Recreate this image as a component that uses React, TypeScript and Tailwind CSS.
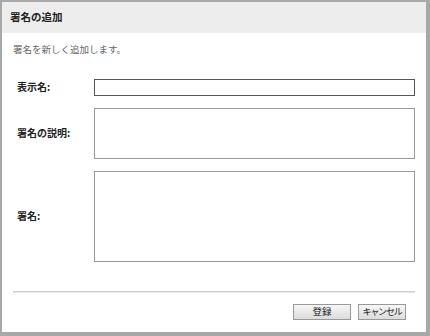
const font = { fontFamily: '"Noto Sans CJK JP", "Noto Sans", sans-serif' };

function Field({ label, height, dark }: { label: string; height: string; dark?: boolean }) {
  return (
    <div className="flex items-center">
      <div className="w-[77px] shrink-0 text-[10px] font-bold text-[#222]">{label}</div>
      <div className={`w-[322px] ${height} border bg-white ${dark ? 'border-[#555]' : 'border-[#999]'}`} />
    </div>
  );
}

export default function App() {
  return (
    <div
      className="w-[430px] h-[336px] flex flex-col bg-white border-l-2 border-t-2 border-r-4 border-b-4 border-[#a8a8a8] leading-none"
      style={font}
    >
      {/* Title bar */}
      <div className="h-[31px] shrink-0 flex items-center px-2 bg-[#ededed] text-[10.5px] font-bold text-[#222]">
        署名の追加
      </div>

      <div className="flex flex-col flex-1 px-[11px]">
        <p className="mt-[12px] text-[9.5px] text-[#666]">署名を新しく追加します。</p>

        {/* Form */}
        <div className="mt-[24px] pl-[4px] flex flex-col gap-[12px]">
          <Field label="表示名:" height="h-[17px]" dark />
          <Field label="署名の説明:" height="h-[51px]" />
          <Field label="署名:" height="h-[91px]" />
        </div>

        <div className="mt-[29px] w-[402px] h-[2px] bg-[#cfcfcf] border-b border-[#e8e8e8]" />

        {/* Buttons */}
        <div className="mt-[11px] w-[393px] flex justify-end gap-[7px]">
          <button className="w-[58px] h-[16px] border border-[#999] bg-gradient-to-b from-[#f6f6f6] to-[#dcdcdc] text-[9.5px] text-[#222] whitespace-nowrap">
            登録
          </button>
          <button className="w-[48px] h-[16px] border border-[#999] bg-gradient-to-b from-[#f6f6f6] to-[#dcdcdc] text-[9px] tracking-[-1.2px] text-[#222] whitespace-nowrap">
            キャンセル
          </button>
        </div>
      </div>
    </div>
  );
}
